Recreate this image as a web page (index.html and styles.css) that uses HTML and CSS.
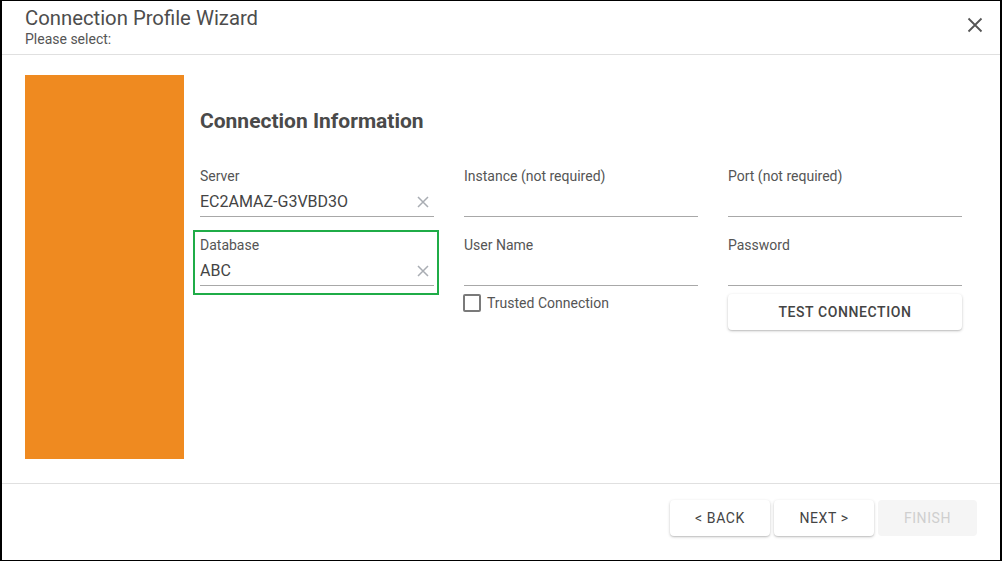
FILE: index.html
```html
<!DOCTYPE html>
<html lang="en">
<head>
<meta charset="utf-8">
<title>Connection Profile Wizard</title>
<link rel="stylesheet" href="styles.css">
</head>
<body>
<div class="frame">
  <header class="header">
    <div class="titles">
      <div class="title">Connection Profile Wizard</div>
      <div class="subtitle">Please select:</div>
    </div>
    <button class="close" aria-label="Close">
      <svg width="16" height="16" viewBox="0 0 16 16"><path d="M1.5 1.5L14.5 14.5M14.5 1.5L1.5 14.5" stroke="#555" stroke-width="1.8" fill="none"/></svg>
    </button>
  </header>
  <main class="body">
    <div class="banner"></div>
    <section class="content">
      <h2 class="heading">Connection Information</h2>
      <div class="grid">
        <div class="field">
          <label class="label">Server</label>
          <div class="input"><span class="value">EC2AMAZ-G3VBD3O</span>
            <svg class="clear" width="12" height="12" viewBox="0 0 12 12"><path d="M1 1L11 11M11 1L1 11" stroke="#a9adb3" stroke-width="1.5" fill="none"/></svg>
          </div>
        </div>
        <div class="field">
          <label class="label">Instance (not required)</label>
          <div class="input"><span class="value"></span></div>
        </div>
        <div class="field">
          <label class="label">Port (not required)</label>
          <div class="input"><span class="value"></span></div>
        </div>
        <div class="field highlighted">
          <label class="label">Database</label>
          <div class="input"><span class="value">ABC</span>
            <svg class="clear" width="12" height="12" viewBox="0 0 12 12"><path d="M1 1L11 11M11 1L1 11" stroke="#a9adb3" stroke-width="1.5" fill="none"/></svg>
          </div>
        </div>
        <div class="stack">
          <div class="field">
            <label class="label">User Name</label>
            <div class="input"><span class="value"></span></div>
          </div>
          <label class="check"><span class="box"></span><span>Trusted Connection</span></label>
        </div>
        <div class="stack">
          <div class="field">
            <label class="label">Password</label>
            <div class="input"><span class="value"></span></div>
          </div>
          <button class="btn test">TEST CONNECTION</button>
        </div>
      </div>
    </section>
  </main>
  <footer class="footer">
    <button class="btn nav">&lt; BACK</button>
    <button class="btn nav">NEXT &gt;</button>
    <button class="btn nav disabled">FINISH</button>
  </footer>
</div>
</body>
</html>
```

FILE: styles.css
```css
* { box-sizing: border-box; }
html, body { margin: 0; padding: 0; background: #fff; }
body { font-family: Roboto, "Noto Sans", Arial, sans-serif; color: #4a4a4a; }

.frame {
  width: 1002px;
  height: 561px;
  border: 1px solid #000;
  border-left-width: 2px;
  border-right-width: 2px;
  display: flex;
  flex-direction: column;
  background: #fff;
}

.header {
  height: 54px;
  flex: none;
  border-bottom: 1px solid #e0e0e0;
  display: flex;
  justify-content: space-between;
  align-items: flex-start;
  padding: 5px 17px 0 23px;
}
.title { font-size: 20.3px; line-height: 24px; color: #4d4d4d; }
.subtitle { font-size: 14px; line-height: 16px; color: #555; margin-top: 1px; }
.close {
  border: 0; background: none; padding: 0; margin-top: 11px;
  width: 16px; height: 16px; cursor: pointer; display: flex;
}

.body {
  flex: 1;
  min-height: 0;
  display: flex;
  gap: 16px;
  padding: 20px 24px 24px 23px;
  border-bottom: 1px solid #e0e0e0;
}
.banner { width: 159px; background: #ef8a20; flex: none; }
.content { flex: 1; }
.heading {
  margin: 32px 0 0;
  font-size: 21px;
  line-height: 28px;
  font-weight: 700;
  color: #4a4a4a;
}

.grid {
  margin-top: 33px;
  display: grid;
  grid-template-columns: 234px 234px 234px;
  column-gap: 30px;
  row-gap: 20px;
  align-items: start;
}
.field { position: relative; }
.label { display: block; font-size: 14px; line-height: 16px; color: #555; }
.input {
  height: 33px;
  border-bottom: 1px solid #a8a8a8;
  display: flex;
  align-items: center;
  justify-content: space-between;
  padding: 4px 5px 0 0;
}
.value { font-size: 16px; line-height: 20px; color: #444; }
.clear { flex: none; }

.highlighted::after {
  content: "";
  position: absolute;
  left: -7px; right: -5px; top: -7px; bottom: -9px;
  border: 2px solid #1fac47;
  pointer-events: none;
}

.stack { display: flex; flex-direction: column; }
.check {
  margin-top: 8px;
  display: flex;
  align-items: center;
  gap: 6px;
  font-size: 14px;
  line-height: 18px;
  color: #555;
  margin-left: -1px;
}
.box {
  width: 18px; height: 18px;
  border: 2px solid #7a7a7a;
  border-radius: 2px;
  display: inline-block;
}

.btn {
  font-family: Roboto, "Noto Sans", Arial, sans-serif;
  font-size: 14px;
  font-weight: 500;
  letter-spacing: 0.6px;
  color: #444;
  background: #fff;
  border: 0;
  border-radius: 4px;
  height: 36px;
  box-shadow: 0 1px 3px rgba(0,0,0,0.22), 0 1px 1px rgba(0,0,0,0.08);
  cursor: pointer;
}
.test { margin-top: 8px; width: 234px; }

.footer {
  flex: none;
  height: 76px;
  display: flex;
  justify-content: flex-end;
  align-items: flex-start;
  gap: 4px;
  padding: 16px 23px 0 0;
}
.nav { width: 100px; font-weight: 400; }
.disabled { background: #f5f5f5; color: #cfcfcf; box-shadow: none; width: 99px; }
```
